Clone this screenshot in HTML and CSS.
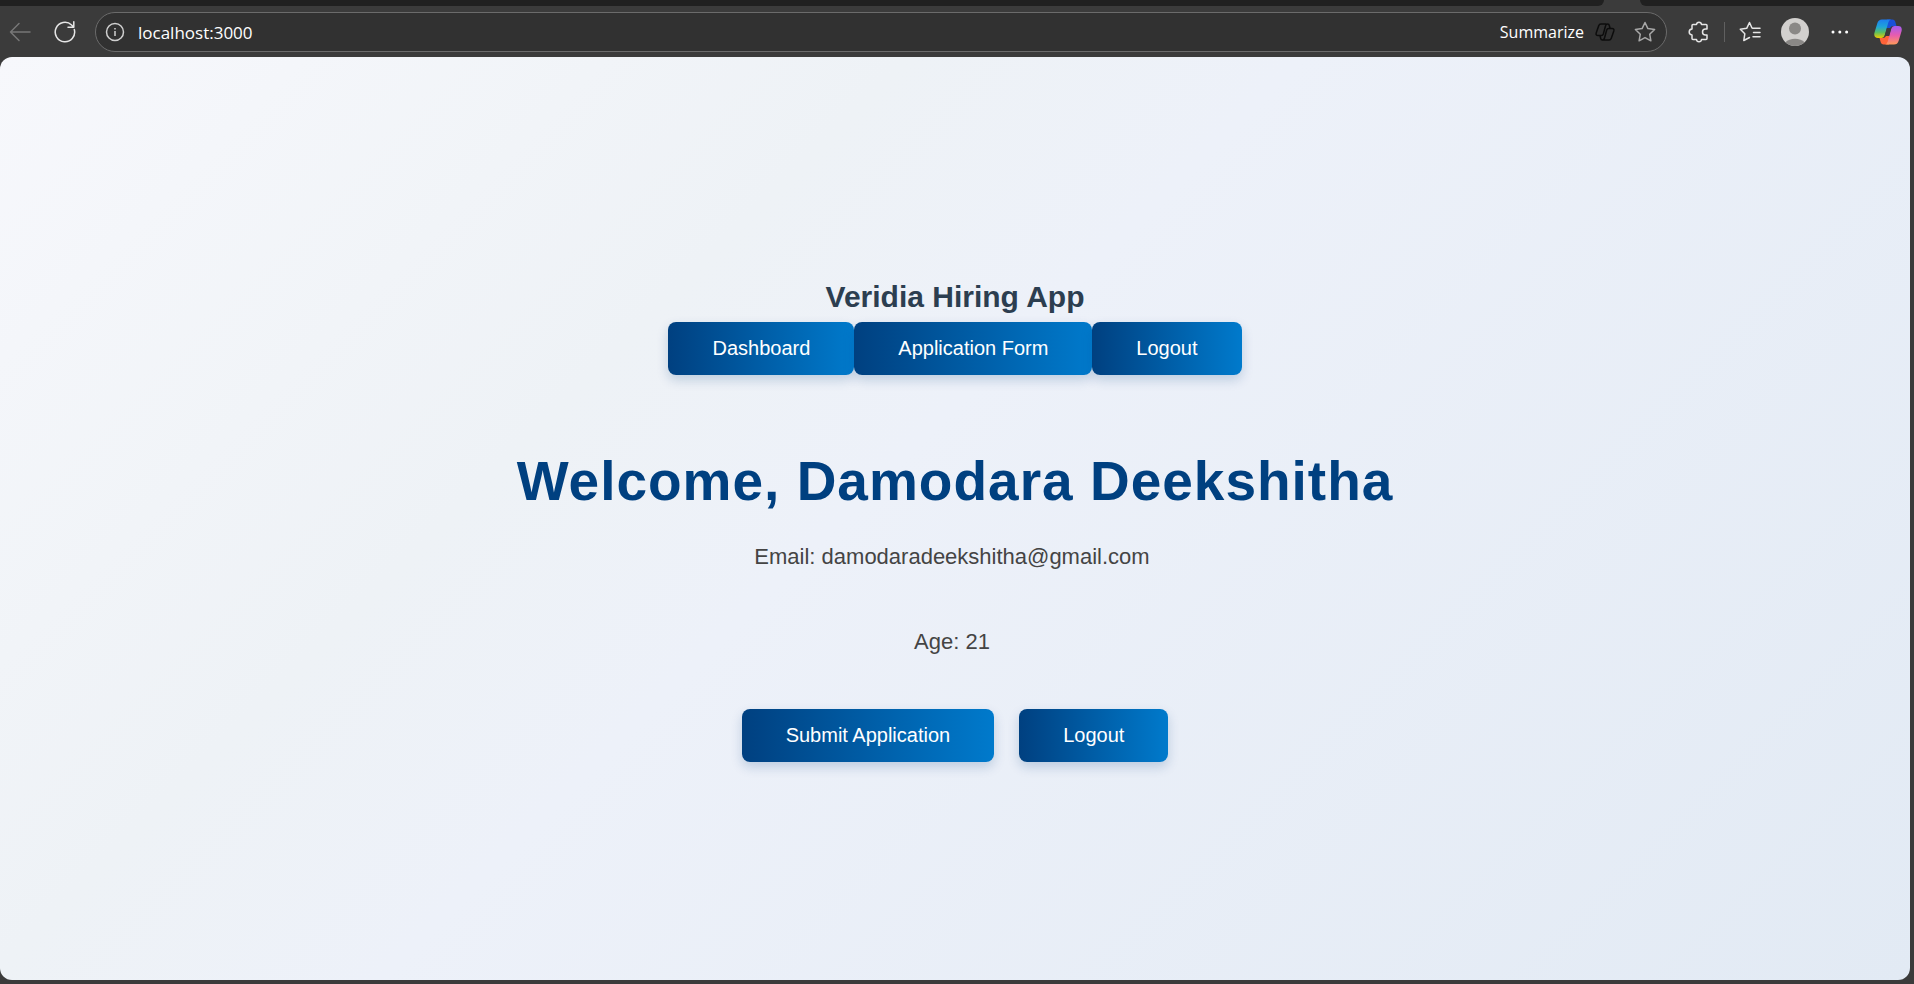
FILE: index.html
```html
<!DOCTYPE html>
<html lang="en">
<head>
<meta charset="utf-8">
<title>Veridia Hiring App</title>
<link rel="stylesheet" href="styles.css">
</head>
<body>
<div class="browser">
  <div class="tabstrip"><span class="tabs tabs-left"></span><span class="active-tab"></span><span class="tabs tabs-right"></span></div>
  <header class="toolbar">
    <button class="icon-btn back" aria-label="Back"><svg width="22" height="22" viewBox="0 0 22 22"><path d="M21 11H1.500M10 2.500 1.500 11l8.500 8.500"/></svg></button>
    <button class="icon-btn reload" aria-label="Refresh"><svg width="22" height="22" viewBox="0 0 22 22"><path d="M20.300 8.500A9.700 9.700 0 1 1 17.600 4L19.500 6M19.800.8V6.200H14"/></svg></button>
    <div class="address">
      <svg class="info" width="20" height="20" viewBox="0 0 20 20"><circle cx="10" cy="10" r="8.500"/><path d="M10 9v5M10 6v1.600"/></svg>
      <input class="url" type="text" aria-label="Address" value="localhost:3000">
      <button class="summarize">Summarize
        <svg width="20" height="18" viewBox="0 0 20 18"><path d="M11.500 1H6Q4.300 1 3.700 2.800L1.200 10Q.5 12.500 3 12.500H6.500Q7.800 12.500 8.300 11L10.500 3Q11 1 12.500 1Q14 1 14.300 2.500L15 5M8.500 17H14Q15.700 17 16.300 15.200L18.800 8Q19.500 5.500 17 5.500H13.500Q12.200 5.500 11.700 7L9.500 15Q9 17 7.500 17Q6 17 5.700 15.500L5 12.500"/></svg>
      </button>
      <button class="icon-btn star" aria-label="Add to favorites"><svg width="22" height="22" viewBox="0 0 22 22"><path d="m11 1.500 2.900 6.100 6.700.9-4.900 4.700 1.200 6.600-5.900-3.200-5.900 3.200 1.200-6.600L1.400 8.500l6.700-.9z"/></svg></button>
    </div>
    <button class="icon-btn ext" aria-label="Extensions"><svg width="22" height="22" viewBox="0 0 22 22"><path d="M4 4.500Q4 3.500 5 3.500H8.500Q8.700 1.200 11 1.200T13.500 3.500H18Q19 3.500 19 4.500V8H17.500A2.800 2.800 0 0 0 17.500 14H19V17.500Q19 18.500 18 18.500H13.500Q13.300 20.800 11 20.800T8.500 18.500H5Q4 18.500 4 17.500V14Q1.200 13.700 1.200 11T4 8z"/></svg></button>
    <span class="divider"></span>
    <button class="icon-btn favs" aria-label="Favorites"><svg width="22" height="22" viewBox="0 0 22 22"><path d="M13.500 7.200H21M14.500 11.500H21M14 15.800H21M13 7 10.500 1.500 7.700 7.300 1.300 8.300l4.500 4.500-1 6.700 5.700-3"/></svg></button>
    <button class="icon-btn avatar" aria-label="Profile"><svg width="28" height="28" viewBox="0 0 28 28"><circle cx="14" cy="14" r="14" fill="#d2d0ce"/><circle cx="14" cy="10.500" r="6" fill="#8a8886"/><path d="M4.500 24.200a11 7 0 0 1 19 0A14 14 0 0 1 4.500 24.200z" fill="#8a8886"/></svg></button>
    <button class="icon-btn more" aria-label="Settings and more"><svg width="18" height="4" viewBox="0 0 18 4"><circle cx="2" cy="2" r="1.500"/><circle cx="8.800" cy="2" r="1.500"/><circle cx="15.600" cy="2" r="1.500"/></svg></button>
    <button class="icon-btn copilot" aria-label="Copilot"><svg width="28" height="26" viewBox="0 0 28 26">
      <defs>
        <linearGradient id="cool" x1="0" y1="0" x2="0" y2="1"><stop offset="0" stop-color="#1c7df0"/><stop offset=".4" stop-color="#1fa5d8"/><stop offset=".7" stop-color="#5cbf60"/><stop offset="1" stop-color="#f0cc00"/></linearGradient>
        <linearGradient id="warm" x1="0" y1="0" x2="0" y2="1"><stop offset="0" stop-color="#a45cf2"/><stop offset=".5" stop-color="#e75cae"/><stop offset="1" stop-color="#ff9a5a"/></linearGradient>
      </defs>
      <path d="M13 .5h5.500q2 0 2.700 2L22.500 7H19q-2 0-3 2L13 9z" fill="#1a50d8"/>
      <path d="M15 25.500H9.500q-2 0-2.700-2L5.500 19H9q2 0 3-2l3 0z" fill="#ff6338"/>
      <path d="M8 .5h9q-2 .5-2.700 3L10.800 16q-1 3-3.500 3H4q-4.500 0-3.600-5L3.400 4Q4.500.5 8 .5z" fill="url(#cool)"/>
      <path d="M20 25.500h-9q2-.5 2.700-3L17.200 10q1-3 3.500-3H24q4.500 0 3.600 5l-3 10q-1.100 3.500-4.600 3.500z" fill="url(#warm)"/>
      <path d="M13 9h4.200L15 17h-4.400z" fill="#3b3b3b"/>
    </svg></button>
  </header>
  <main class="page">
    <h2 class="brand">Veridia Hiring App</h2>
    <nav class="nav">
      <button class="btn">Dashboard</button>
      <button class="btn">Application Form</button>
      <button class="btn">Logout</button>
    </nav>
    <h1 class="welcome">Welcome, Damodara Deekshitha</h1>
    <p class="detail">Email: damodaradeekshitha@gmail.com</p>
    <p class="detail">Age: 21</p>
    <div class="actions">
      <button class="btn">Submit Application</button>
      <button class="btn">Logout</button>
    </div>
  </main>
</div>
</body>
</html>
```
FILE: styles.css
```css
* { box-sizing: border-box; }
body { margin: 0; background: #3b3b3b; font-family: Arial, "Liberation Sans", sans-serif; }
button { border: 0; background: none; padding: 0; font: inherit; color: inherit; cursor: pointer; }
svg { display: block; }

.browser { display: flex; flex-direction: column; min-height: 100vh; padding: 0 4px 4px 0; }
.tabstrip { display: flex; height: 7px; margin-right: -4px; background: #3b3b3b; }
.tabs { height: 6px; background: #202020; }
.tabs-left { flex: 1; border-bottom-right-radius: 6px; }
.active-tab { width: 36px; }
.tabs-right { width: 274px; border-bottom-left-radius: 6px; }

.toolbar { display: flex; align-items: center; height: 50px; padding: 0 8px 0 9px; color: #fff; }
.icon-btn { flex: none; }
.icon-btn svg { fill: none; stroke: #e6e6e6; stroke-width: 1.5; stroke-linejoin: round; stroke-linecap: round; }
.back svg { stroke: #777; }
.reload { margin-left: 23px; }
.address { display: flex; flex: 1; align-items: center; height: 40px; margin-left: 19px; padding: 0 10px 0 9px; border: 1px solid #6b6b6b; border-radius: 20px; background: #313131; }
.info { fill: none; stroke: #d0d0d0; stroke-width: 1.5; }
.url { flex: 1; min-width: 0; margin-left: 13px; padding: 0; border: 0; outline: 0; background: none; color: #fff; font: 17px "Open Sans", "Noto Sans", sans-serif; }
.summarize { display: flex; align-items: center; gap: 11px; font: 16px "Open Sans", "Noto Sans", sans-serif; }
.summarize svg { fill: none; stroke: #0c0c0c; stroke-width: 1.5; }
.star { margin-left: 19px; }
.star svg { stroke: #a8a8a8; }
.ext { margin-left: 21px; }
.divider { width: 1px; height: 20px; margin: 0 14px; background: #606060; }
.avatar { margin-left: 20px; }
.avatar svg { stroke: none; }
.more { margin-left: 22px; }
.more svg { fill: #fff; stroke: none; }
.copilot { margin-left: 25px; }
.copilot svg { stroke: none; }

.page { display: flex; flex: 1; flex-direction: column; align-items: center; justify-content: center; padding-bottom: 3px; border-radius: 12px; background: linear-gradient(135deg, #f7f8fc 0%, #eef2f6 32%, #edf1f9 46%, #e2eaf4 100%); }
.brand { margin: 0; color: #2c3e50; font-size: 30px; line-height: 50px; }
.nav { display: flex; }
.btn { height: 53px; padding: 0 44px; border-radius: 8px; background: linear-gradient(90deg, #004080, #007acc); box-shadow: 0 5px 12px rgba(0, 64, 128, 0.2); color: #fff; font-size: 20px; }
.welcome { margin: 74px 0 25px; color: #004080; font-size: 55px; line-height: 65px; letter-spacing: 1px; }
.detail { margin: 0 6px 50px 0; color: #444; font-size: 22px; line-height: 35px; }
.actions { display: flex; gap: 25px; }
```
